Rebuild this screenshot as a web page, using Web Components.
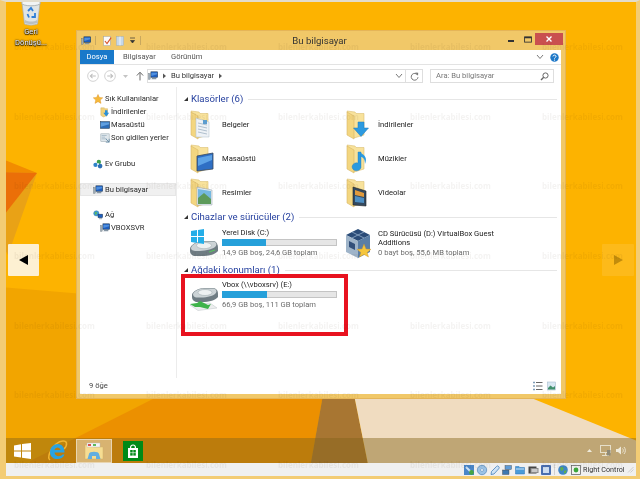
<!DOCTYPE html>
<html lang="tr">
<head>
<meta charset="utf-8">
<title>Bu bilgisayar</title>
<style>
    html, body { margin: 0; padding: 0; background: #f2ca70; }
    body { width: 640px; height: 479px; overflow: hidden; font-family: Roboto, "Open Sans", sans-serif; }
</style>
</head>
<body>
<vm-screen>
    <desk-wallpaper slot="wall"></desk-wallpaper>

    <desktop-icon slot="desk" label="Geri Dönüşü..."></desktop-icon>
    <nav-arrow slot="desk" dir="left"></nav-arrow>
    <nav-arrow slot="desk" dir="right"></nav-arrow>

    <explorer-window slot="desk">
        <nav-item slot="nav" icon="star" level="0">Sık Kullanılanlar</nav-item>
        <nav-item slot="nav" icon="dl-small" level="1">İndirilenler</nav-item>
        <nav-item slot="nav" icon="desk-small" level="1">Masaüstü</nav-item>
        <nav-item slot="nav" icon="recent" level="1">Son gidilen yerler</nav-item>
        <nav-item slot="nav" icon="home" level="0" gap="13">Ev Grubu</nav-item>
        <nav-item slot="nav" icon="pc" level="0" gap="13" selected>Bu bilgisayar</nav-item>
        <nav-item slot="nav" icon="net" level="0" gap="12">Ağ</nav-item>
        <nav-item slot="nav" icon="pc" level="1">VBOXSVR</nav-item>

        <group-header>Klasörler (6)</group-header>
        <item-grid rows="34" style="padding: 2px 0 0">
            <folder-item icon="f-docs">Belgeler</folder-item>
            <folder-item icon="f-down">İndirilenler</folder-item>
            <folder-item icon="f-desk">Masaüstü</folder-item>
            <folder-item icon="f-music">Müzikler</folder-item>
            <folder-item icon="f-pics">Resimler</folder-item>
            <folder-item icon="f-video">Videolar</folder-item>
        </item-grid>

        <group-header>Cihazlar ve sürücüler (2)</group-header>
        <item-grid rows="36">
            <drive-item icon="drive-win" used="38" detail="14,9 GB boş, 24,6 GB toplam">Yerel Disk (C:)</drive-item>
            <drive-item icon="vbox" detail="0 bayt boş, 55,6 MB toplam">CD Sürücüsü (D:) VirtualBox Guest Additions</drive-item>
        </item-grid>

        <group-header style="margin: 1px 0 -1px">Ağdaki konumları (1)</group-header>
        <item-grid rows="36">
            <drive-item icon="drive-net" drop="8" used="39" detail="66,9 GB boş, 111 GB toplam">Vbox (\\vboxsrv) (E:)</drive-item>
        </item-grid>
    </explorer-window>

    <red-mark slot="over"></red-mark>
    <water-mark slot="over"></water-mark>

    <task-bar slot="bar"></task-bar>
    <vm-status slot="bar"></vm-status>
</vm-screen>

<script>
// svg bodies for every icon, keyed by name: [viewBox w, viewBox h, markup]
const folderBase = `
    <path d="M1 1 L9 2 L10 3.5 L18 3.5 L18 25 L8 28 Z" fill="#f8e29b" stroke="#dcbf72" stroke-width=".6"/>
    <path d="M1 2 L8 6 L8 29 L1 25 Z" fill="#f3d680" stroke="#d8b766" stroke-width=".6"/>`;

const ICONS = {
    'f-docs': [24, 30, folderBase + `
        <path d="M6 8 L19 12 L19 27 L6 27 Z" fill="#eef2f6" stroke="#aebcc8" stroke-width=".5"/>
        <path d="M8 13 L17 15 M8 16 L17 18 M8 19 L17 21 M8 22 L17 24" stroke="#9fb2c3" stroke-width=".8"/>
        <rect x="13" y="10" width="4" height="4" fill="#5c9dcf"/>`],
    'f-down': [24, 30, folderBase + `
        <path d="M12 12 H18 V18 H22.5 L15 26.5 L7.5 18 H12 Z" fill="#2c9ae0" stroke="#1b78bc" stroke-width=".5"/>`],
    'f-desk': [24, 30, folderBase + `
        <path d="M7 12 L23 9 L23 25 L7 27 Z" fill="#2f6fc4" stroke="#39475a" stroke-width=".8"/>
        <path d="M8 14 L22 11 L22 16 L8 22 Z" fill="#5ea3e6"/>`],
    'f-music': [24, 30, folderBase + `
        <path d="M15 8 V22 A4.5 4 0 1 1 12 19 V8 Z" fill="#2c9ae0" stroke="#1b78bc" stroke-width=".4"/>
        <path d="M15 9 C20 12 21 15 19 20 C19 15 17 13 15 13 Z" fill="#2c9ae0"/>`],
    'f-pics': [24, 30, folderBase + `
        <path d="M7 9 L22 12 L22 27 L7 27 Z" fill="#e6eef2" stroke="#8c9aa6" stroke-width=".5"/>
        <path d="M8 11 L21 13 L21 21 L8 20 Z" fill="#75b8e0"/>
        <path d="M8 20 L14 15 L21 21 L21 26 L8 26 Z" fill="#5d9a5b"/>`],
    'f-video': [24, 30, folderBase + `
        <path d="M7 9 L20 13 L20 28 L7 27 Z" fill="#33495f" stroke="#222" stroke-width=".6"/>
        <path d="M9 12 L18 15 L18 19 L9 17 Z" fill="#e09a3c"/>
        <path d="M9 18 L18 20 L18 25 L9 24 Z" fill="#4d8fc4"/>`],
    'drive-win': [30, 28, `
        <path d="M1 20 C1 16 8 12 14 12 L25 12 C28 13 29 16 29 19 L29 22 C27 25 20 27 13 27 L5 27 C2 26 1 24 1 22 Z" fill="#6f7c83"/>
        <path d="M2 19 C3 15 9 12.5 14 12.5 L25 12.5 C28 13.5 28 16 26 18 C22 21 12 22.5 6 22 C3 21.5 2 20.5 2 19 Z" fill="#ccd3d6"/>
        <ellipse cx="15" cy="16.5" rx="7.5" ry="3.2" fill="#eef1f2" stroke="#9aa6ab" stroke-width=".5"/>
        <g fill="#25aee8"><path d="M2 2 L8 1 V7 H2 Z"/><path d="M9 .9 L15 0 V7 H9 Z"/><path d="M2 8 H8 V14 L2 13 Z"/><path d="M9 8 H15 V15 L9 14 Z"/></g>
        <path d="M20 23 L26 21" stroke="#58c45e" stroke-width="1.2"/>`],
    'drive-net': [30, 24, `
        <path d="M3 8 C3 5 9 1 15 1 L25 1 C28 2 29 4 29 7 L29 10 C27 13 20 15 13 15 L7 15 C4 14 3 12 3 10 Z" fill="#6f7c83"/>
        <path d="M4 7 C5 4 10 1.5 15 1.5 L25 1.5 C28 2.5 28 5 26 7 C22 10 13 11 7 10.5 C5 10 4 9 4 7 Z" fill="#ccd3d6"/>
        <ellipse cx="16" cy="5.5" rx="7" ry="3" fill="#eef1f2" stroke="#9aa6ab" stroke-width=".5"/>
        <path d="M1 18 L21 16 L28 21 L9 23.5 Z" fill="#eceeee" stroke="#bcc3c6" stroke-width=".5"/>
        <path d="M1 17 L8 16 L11 14 L19 18 L22 17 L19 22 L11 20 L6 20 Z" fill="#3fb34a"/>`],
    'vbox': [26, 29, `
        <path d="M13 0 L25 6 L13 12 L1 6 Z" fill="#2b4c78"/>
        <path d="M1 6 L13 12 L13 29 L1 23 Z" fill="#9fb4c9"/>
        <path d="M25 6 L13 12 L13 29 L25 23 Z" fill="#5a7ea6"/>
        <path d="M4 12 L10 15 V21 L4 18 Z" fill="#33507a"/>
        <path d="M7 3 L19 9 M19 3 L7 9" stroke="#7f9bbb" stroke-width="1"/>
        <path d="M19 15 L21 20 L26 20.3 L22.2 23.4 L23.5 28 L19 25.4 L14.5 28 L15.8 23.4 L12 20.3 L17 20 Z" fill="#f6c63c" stroke="#c9932a" stroke-width=".4"/>`],
    'star': [12, 12, `<path d="M6 .5 L7.7 4.2 L11.7 4.6 L8.7 7.3 L9.6 11.3 L6 9.2 L2.4 11.3 L3.3 7.3 L.3 4.6 L4.3 4.2 Z" fill="#f6b93a" stroke="#d98e22" stroke-width=".5"/>`],
    'dl-small': [12, 12, `<path d="M1 1 L5 1 L6 2 L9 2 V10 L4 12 L1 10 Z" fill="#f1d27a" stroke="#c9a655" stroke-width=".5"/><path d="M6 4 H9 V7 H11 L7.5 11.5 L4 7 H6 Z" fill="#2a8fd8"/>`],
    'desk-small': [12, 12, `<rect x=".5" y="2" width="11" height="8" fill="#2c6cb6" stroke="#26415f" stroke-width=".7"/><path d="M1 3 H11 V5 L1 8 Z" fill="#5f9fe0"/>`],
    'recent': [12, 12, `<rect x="1" y="1" width="10" height="9" fill="#dfe7ec" stroke="#8e9ea8" stroke-width=".6"/><path d="M2 3 H8 M2 5 H6 M2 7 H8" stroke="#8ba3b5" stroke-width=".7"/><path d="M7 7 L11 11 M11 7 L11 11 L7 11" stroke="#56809c" stroke-width=".9" fill="none"/>`],
    'home': [12, 12, `<circle cx="7" cy="3.5" r="2.6" fill="#3e9f4a"/><circle cx="3" cy="7" r="2.6" fill="#2f83c9"/><circle cx="8.5" cy="8.5" r="2.8" fill="#2d6fb5"/><circle cx="6" cy="6" r="1.2" fill="#dff0fa"/>`],
    'pc': [12, 12, `<rect x="3.5" y="1" width="8" height="6.5" fill="#1f5fc0" stroke="#1b3550" stroke-width=".7"/><path d="M4 2 H11 V4 L4 6 Z" fill="#4d8fe0"/><path d="M5 8.5 H10 V10 H4 Z" fill="#8595a3"/><rect x=".6" y="3" width="2" height="7" fill="#9daab5" stroke="#55636e" stroke-width=".4"/>`],
    'net': [12, 12, `<circle cx="4" cy="4" r="3.2" fill="#3d9bd6" stroke="#21638f" stroke-width=".4"/><path d="M2 3 L4 2 L5 4 L3 6 Z" fill="#5cb85c"/><rect x="6" y="5" width="5.5" height="4.2" fill="#1f5fc0" stroke="#1b3550" stroke-width=".6"/><path d="M7 10 H11 V11 H7 Z" fill="#8595a3"/>`],
    'bin': [24, 27, `
        <path d="M3 4 L21 4 L18.5 25 C15 26.5 9 26.5 5.5 25 Z" fill="#dfe4e6" stroke="#a8aeb0" stroke-width=".7"/>
        <ellipse cx="12" cy="4" rx="9.5" ry="2.8" fill="#f2f4f4" stroke="#99a0a2" stroke-width=".7"/>
        <path d="M9 12 L12 9 L14 12 M16 14 L16 18 L12.5 18 M8.5 15 L10 18.5" fill="none" stroke="#2f7ed8" stroke-width="1.8"/>
        <path d="M6 21 C10 23 15 23 18 21 L18 24 C15 25.5 9 25.5 6 24 Z" fill="#b9c0c2"/>`],
    'doc-check': [12, 12, `<rect x="2" y=".5" width="8" height="11" fill="#fbfbfb" stroke="#9aa2a8" stroke-width=".6"/><path d="M3.5 6 L6 9 L11 2" fill="none" stroke="#d9542b" stroke-width="1.4"/>`],
    'doc-pages': [10, 12, `<rect x=".5" y=".5" width="9" height="11" fill="#c6d8ea" stroke="#8ea9c2" stroke-width=".5"/><path d="M5 .5 V11.5" stroke="#fff" stroke-width="1"/>`],
    'qat': [7, 7, `<path d="M1 1 H6 M1.5 3.5 H5.5 L3.5 6 Z" stroke="#333" stroke-width=".7" fill="#333"/>`],
    'min': [8, 8, `<rect x="1" y="5" width="6" height="2" fill="#333"/>`],
    'max': [9, 8, `<rect x=".6" y="1" width="7.8" height="6" fill="none" stroke="#333" stroke-width="1"/><rect x=".6" y="1" width="7.8" height="1.6" fill="#333"/>`],
    'close': [8, 8, `<path d="M1.5 1.5 L6.5 6.5 M6.5 1.5 L1.5 6.5" stroke="#fff" stroke-width="1.4"/>`],
    'chev-down': [8, 6, `<path d="M1 1 L4 4.5 L7 1" fill="none" stroke="#7a7a7a" stroke-width="1"/>`],
    'chev-right': [5, 6, `<path d="M1 .5 L4 3 L1 5.5 Z" fill="#555"/>`],
    'help': [10, 10, `<circle cx="5" cy="5" r="4.7" fill="#1e78c8"/><path d="M3.3 3.8 C3.4 1.8 6.8 1.9 6.7 3.8 C6.6 5 5 5 5 6.2" fill="none" stroke="#fff" stroke-width="1.1"/><circle cx="5" cy="7.8" r=".7" fill="#fff"/>`],
    'back': [13, 13, `<circle cx="6.5" cy="6.5" r="5.8" fill="#fff" stroke="#cfcfcf"/><path d="M9.5 6.5 H4 M6 4.2 L3.6 6.5 L6 8.8" fill="none" stroke="#bdbdbd" stroke-width="1.1"/>`],
    'forward': [13, 13, `<circle cx="6.5" cy="6.5" r="5.8" fill="#fff" stroke="#cfcfcf"/><path d="M3.5 6.5 H9 M7 4.2 L9.4 6.5 L7 8.8" fill="none" stroke="#bdbdbd" stroke-width="1.1"/>`],
    'drop': [7, 5, `<path d="M1 1 H6 L3.5 4 Z" fill="#c4c4c4"/>`],
    'up': [9, 11, `<path d="M4.5 10.5 V2 M1 5 L4.5 1.2 L8 5" fill="none" stroke="#666" stroke-width="1.1"/>`],
    'refresh': [9, 9, `<path d="M7.5 3 A3.4 3.4 0 1 0 8 5.2" fill="none" stroke="#777" stroke-width="1"/><path d="M5.2 .6 L8.2 .8 L8 3.8 Z" fill="#777"/>`],
    'search': [9, 9, `<circle cx="5.5" cy="3.5" r="2.6" fill="none" stroke="#666" stroke-width="1"/><path d="M3.7 5.3 L1 8" stroke="#666" stroke-width="1.4"/>`],
    'view-list': [11, 10, `<path d="M1 1.5 H3 M1 5 H3 M1 8.5 H3" stroke="#7f9db9" stroke-width="1.6"/><path d="M4 1.5 H10.5 M4 5 H10.5 M4 8.5 H10.5" stroke="#666" stroke-width="1"/>`],
    'view-tile': [9, 10, `<rect x=".5" y="1" width="8" height="8" fill="#d9e7f2" stroke="#9cb4c8" stroke-width=".5"/><path d="M1 7 L3.5 4.5 L6 6.5 L8 5 V8.5 H1 Z" fill="#3f8f6c"/>`],
    'win': [17, 16, `<g fill="#fff"><path d="M0 2.4 L7 1.3 V7.4 H0 Z"/><path d="M8 1.1 L17 0 V7.4 H8 Z"/><path d="M0 8.4 H7 V14.6 L0 13.6 Z"/><path d="M8 8.4 H17 V16 L8 14.8 Z"/></g>`],
    'ie': [20, 20, `
        <path d="M3 19 C0 17 3 8 9 3 C14 -1 19 -.5 19.5 2 C19.8 4 18 7 17 8" fill="none" stroke="#f2b531" stroke-width="1.5"/>
        <path d="M3 11 C3 6 7 3 11 3 C15 3 17.5 6.5 17.5 11.5 H7.5 C8 16 13.5 16 15.5 13.5 H17.5 C15.5 20 3 20 3 11 Z M7.5 9 H13.5 C13 5.5 8 5.5 7.5 9 Z" fill="#2aa3e2"/>`],
    'explorer': [20, 18, `
        <path d="M1 3 H8 L9.5 5 H19 V17 H1 Z" fill="#f6dd92" stroke="#d2b266" stroke-width=".5"/>
        <rect x="3" y="1" width="13" height="4" fill="#f4f4f4" stroke="#b9b9b9" stroke-width=".4"/>
        <path d="M4 2 H7 V4 H4 Z" fill="#d9534f"/><path d="M9 2 H12 V4 H9 Z" fill="#5cb85c"/>
        <path d="M5 12 C5 9 15 9 15 12 L16.5 17 H12 V14 H8 V17 H3.5 Z" fill="#62aee0"/>`],
    'store': [20, 20, `
        <rect width="20" height="20" fill="#008a17"/>
        <path d="M5 7 H15 V17 H5 Z" fill="#fff"/>
        <path d="M7.5 7 C7.5 3 12.5 3 12.5 7" fill="none" stroke="#fff" stroke-width="1.2"/>
        <g fill="#008a17"><rect x="7.2" y="9" width="2.5" height="2.5"/><rect x="10.3" y="9" width="2.5" height="2.5"/><rect x="7.2" y="12.1" width="2.5" height="2.5"/><rect x="10.3" y="12.1" width="2.5" height="2.5"/></g>`],
    'tray-up': [7, 5, `<path d="M1 4 L3.5 1 L6 4 Z" fill="#efeadb"/>`],
    'tray-net': [11, 11, `<rect x=".5" y=".5" width="10" height="7" fill="none" stroke="#e6dfca" stroke-width="1"/><path d="M5.5 8 V10.5 M2 10.5 H9" stroke="#e6dfca" stroke-width="1"/><rect x="7" y="5" width="3.5" height="5.5" fill="#8e8a78"/>`],
    'tray-vol': [11, 11, `<path d="M1 4 H3 L6 1.5 V9.5 L3 7 H1 Z" fill="#efeadb"/><path d="M7.5 3.5 C8.6 4.6 8.6 6.4 7.5 7.5 M9 2 C10.8 4 10.8 7 9 9" fill="none" stroke="#efeadb" stroke-width=".9"/>`],
    'vm-storage': [10, 10, `<rect width="10" height="10" fill="#4a86c8"/><path d="M2 2 L7 7" stroke="#cfe3f5" stroke-width="2"/><circle cx="7.5" cy="7.5" r="2.4" fill="#46a546"/>`],
    'vm-disc': [10, 10, `<circle cx="5" cy="5" r="4.7" fill="#9cc3e6" stroke="#3f78b0" stroke-width=".6"/><circle cx="5" cy="5" r="1.4" fill="#fff" stroke="#3f78b0" stroke-width=".5"/>`],
    'vm-usb': [10, 10, `<path d="M8 1 C9.5 2 9.5 3 8.5 4 L4 9 L1 9.5 L1.5 6.5 L6 2 C6.8 1 7.3 .7 8 1 Z" fill="#cfe3f5" stroke="#2f72b5" stroke-width=".7"/>`],
    'vm-share': [10, 10, `<rect x="3" y=".5" width="6.5" height="4" fill="#5f9bd6" stroke="#444" stroke-width=".4"/><rect x=".5" y="5" width="6.5" height="4.5" fill="#3f78b0" stroke="#444" stroke-width=".4"/>`],
    'vm-folder': [10, 10, `<path d="M.5 1.5 H4 L5 2.5 H9.5 V9 H.5 Z" fill="#4a9bd8" stroke="#2f72b5" stroke-width=".5"/><rect x="1" y="3.5" width="8" height="1" fill="#cfe3f5"/>`],
    'vm-screen': [11, 10, `<rect x=".5" y="1.5" width="8" height="7" fill="#444"/><rect x="2.5" y="3" width="8" height="5" fill="#8a8a8a"/><rect x="3.5" y="4" width="6" height="3" fill="#c9c9c9"/>`],
    'vm-rec': [10, 10, `<rect width="10" height="10" fill="#4a6fb0" rx="1"/><rect x="2" y="2" width="6" height="6" fill="#cdddf0"/>`],
    'vm-globe': [10, 10, `<circle cx="5" cy="5" r="4.8" fill="#3f86c6"/><path d="M2 2.5 L5 2 L5.5 5 L3 6 Z M6 6 L8.5 5 L8 8 L6 8.5 Z" fill="#5fb04d"/>`],
    'vm-key': [10, 10, `<rect x=".5" y=".5" width="9" height="9" fill="#f1f1f1" stroke="#555" stroke-width=".7"/><circle cx="5" cy="5" r="2.4" fill="#3aa53a"/>`],
    'grip': [7, 7, `<path d="M6.5 1 L1 6.5 M6.5 3.5 L3.5 6.5" stroke="#c3c3c3" stroke-width=".8"/>`]
};

class UiIcon extends HTMLElement {
    connectedCallback() {
        const [w, h, body] = ICONS[this.getAttribute('name')];
        const dw = this.getAttribute('w') || w;
        const dh = this.getAttribute('h') || h;
        this.attachShadow({ mode: 'open' }).innerHTML = `
        <style>:host { display: block; flex: none; line-height: 0; } svg { overflow: visible; }</style>
        <svg width="${dw}" height="${dh}" viewBox="0 0 ${w} ${h}">${body}</svg>`;
    }
}
customElements.define('ui-icon', UiIcon);

class VmScreen extends HTMLElement {
    constructor() {
        super();
        this.attachShadow({ mode: 'open' }).innerHTML = `
        <style>
            :host {
                display: block; width: 640px; height: 479px; box-sizing: border-box;
                border-style: solid; border-color: #f3cc74; border-width: 2px 4px 3px 6px;
                border-top-color: #e3dccb;
                filter: blur(.45px);
            }
            .screen { position: relative; width: 100%; height: 100%; display: flex; flex-direction: column; overflow: hidden; background: #fdb300; }
            .desk { position: relative; flex: 1; }
        </style>
        <div class="screen">
            <slot name="wall"></slot>
            <div class="desk"><slot name="desk"></slot></div>
            <slot name="bar"></slot>
            <slot name="over"></slot>
        </div>`;
    }
}
customElements.define('vm-screen', VmScreen);

class DeskWallpaper extends HTMLElement {
    connectedCallback() {
        this.attachShadow({ mode: 'open' }).innerHTML = `
        <style>:host { position: absolute; left: -6px; top: -2px; width: 640px; height: 479px; line-height: 0; }</style>
        <svg width="640" height="479" viewBox="0 0 640 479">
            <rect width="640" height="479" fill="#fdb300"/>
            <polygon points="0,160 37,173 8,255 0,240" fill="#e9a216"/>
            <polygon points="0,158 37,173 0,172" fill="#f28c00"/>
            <polygon points="0,172 37,173 0,220" fill="#eb6f08"/>
            <polygon points="0,287 420,322 320,479 0,479" fill="#f2a500"/>
            <polygon points="30,461 250,350 331,350 308,479 30,479" fill="#ec9000"/>
            <polygon points="331,350 345,350 371,479 308,479" fill="#a87632"/>
            <polygon points="345,350 413,350 640,442 640,479 371,479" fill="#f0dcc0"/>
        </svg>`;
    }
}
customElements.define('desk-wallpaper', DeskWallpaper);

class DesktopIcon extends HTMLElement {
    connectedCallback() {
        const [a, b] = this.getAttribute('label').split(' ');
        this.attachShadow({ mode: 'open' }).innerHTML = `
        <style>
            :host {
                position: absolute; left: 3px; top: -3px; width: 44px;
                display: flex; flex-direction: column; align-items: center;
                font: 7.6px/10.5px Roboto, sans-serif; color: #fff; text-align: center;
                text-shadow: 0 0 1px #000, 0 1px 1px #000, 0 0 2px #222;
            }
            .t { margin-top: 1px; }
        </style>
        <ui-icon name="bin"></ui-icon>
        <div class="t">${a}<br>${b}</div>`;
    }
}
customElements.define('desktop-icon', DesktopIcon);

class NavArrow extends HTMLElement {
    connectedCallback() {
        const left = this.getAttribute('dir') === 'left';
        this.attachShadow({ mode: 'open' }).innerHTML = `
        <style>
            :host {
                position: absolute; top: 242px; ${left ? 'left: 2px' : 'left: 596px'};
                width: ${left ? 31 : 32}px; height: 32px; display: flex; align-items: center; justify-content: center;
                background: ${left ? '#fdf0d2' : 'rgba(255,255,255,.1)'}; border-radius: 1px;
            }
            i {
                width: 0; height: 0; border-style: solid; border-width: 5px 0 5px 9px;
                border-color: transparent transparent transparent ${left ? '#000' : '#c28c0c'};
                ${left ? 'transform: rotate(180deg);' : ''}
            }
        </style>
        <i></i>`;
    }
}
customElements.define('nav-arrow', NavArrow);

class ExplorerWindow extends HTMLElement {
    constructor() {
        super();
        this.attachShadow({ mode: 'open' }).innerHTML = `
        <style>
            :host {
                position: absolute; left: 70px; top: 28px; width: 490px; height: 369px;
                box-sizing: border-box; display: flex; flex-direction: column;
                background: #f1c868; border: 1px solid #e5b558; padding: 0 4px 4px 3px;
                font: 7.6px/12px Roboto, sans-serif; color: #222;
            }
            .title { height: 19px; flex: none; display: grid; grid-template-columns: 1fr auto 1fr; align-items: center; margin-right: -2px; }
            .qat { display: flex; align-items: center; padding-left: 1px; }
            .sep { width: 1px; height: 9px; background: #c9a85e; }
            .qat .a { margin-left: 4px; }
            .qat .b { margin-left: 6px; }
            .qat .c { margin-left: 4px; }
            .qat .d { margin-left: 5px; }
            .name { font-size: 9.6px; padding-right: 4px; color: #333; }
            .ctl { justify-self: end; display: flex; align-items: center; height: 14px; align-self: start; padding-top: 1px; }
            .ctl .m { margin-right: 9px; }
            .ctl .r { margin-right: 3px; }
            .x { width: 28px; height: 12px; background: #c9504f; display: flex; align-items: center; justify-content: center; }
            .client { flex: 1; min-height: 0; background: #fff; display: flex; flex-direction: column; }
            .tabs { height: 14px; flex: none; display: flex; align-items: center; border-bottom: 1px solid #e3e3e3; color: #555; }
            .tabs b { font-weight: 400; background: #1979ca; color: #fff; width: 34px; height: 14px; line-height: 14px; text-align: center; margin-right: 9px; }
            .tabs span { width: 48px; }
            .tabs .end { margin-left: auto; display: flex; align-items: center; gap: 6px; padding-right: 2px; }
            .navbar { height: 22px; flex: none; display: flex; align-items: center; padding-left: 7px; }
            .navbar .back { margin-right: 5px; }
            .navbar .drop { margin: 0 7px 0 6px; }
            .addr, .find { height: 14px; box-sizing: border-box; border: 1px solid #dedede; display: flex; align-items: center; color: #333; }
            .addr { width: 276px; margin-left: 3px; gap: 4px; }
            .addr .grow { flex: 1; }
            .addr .cell { height: 100%; width: 16px; border-left: 1px solid #dedede; display: flex; align-items: center; justify-content: center; margin-left: -2px; }
            .find { width: 124px; margin-left: 7px; padding: 0 4px 0 5px; color: #777; justify-content: space-between; }
            .body { flex: 1; min-height: 0; display: flex; }
            .side { width: 97px; flex: none; box-sizing: border-box; border-right: 1px solid #ececec; padding-top: 5px; }
            .main { flex: 1; padding: 5px 4px 0 7px; display: flex; flex-direction: column; }
            .foot { height: 16px; flex: none; display: flex; align-items: center; padding: 0 5px 0 9px; gap: 4px; color: #444; }
            .foot span { margin-right: auto; }
        </style>
        <div class="title">
            <div class="qat">
                <ui-icon name="pc" w="10" h="10"></ui-icon><div class="sep a"></div>
                <ui-icon class="b" name="doc-check" w="10" h="10"></ui-icon>
                <ui-icon class="c" name="doc-pages" w="8" h="10"></ui-icon>
                <ui-icon class="d" name="qat"></ui-icon>
                <div class="sep c"></div>
            </div>
            <div class="name">Bu bilgisayar</div>
            <div class="ctl">
                <ui-icon class="m" name="min"></ui-icon><ui-icon class="r" name="max" w="8" h="7"></ui-icon>
                <div class="x"><ui-icon name="close"></ui-icon></div>
            </div>
        </div>
        <div class="client">
            <div class="tabs">
                <b>Dosya</b><span>Bilgisayar</span><span>Görünüm</span>
                <div class="end"><ui-icon name="chev-down"></ui-icon><ui-icon name="help" w="9" h="9"></ui-icon></div>
            </div>
            <div class="navbar">
                <ui-icon class="back" name="back" w="12" h="12"></ui-icon><ui-icon name="forward" w="12" h="12"></ui-icon>
                <ui-icon class="drop" name="drop"></ui-icon><ui-icon name="up" w="8" h="10"></ui-icon>
                <div class="addr">
                    <ui-icon name="pc" w="10" h="10"></ui-icon><ui-icon name="chev-right"></ui-icon>
                    <span>Bu bilgisayar</span><ui-icon name="chev-right"></ui-icon>
                    <div class="grow"></div>
                    <ui-icon name="chev-down"></ui-icon>
                    <div class="cell"><ui-icon name="refresh"></ui-icon></div>
                </div>
                <div class="find"><span>Ara: Bu bilgisayar</span><ui-icon name="search"></ui-icon></div>
            </div>
            <div class="body">
                <div class="side"><slot name="nav"></slot></div>
                <div class="main"><slot></slot></div>
            </div>
            <div class="foot"><span>9 öğe</span><ui-icon name="view-list"></ui-icon><ui-icon name="view-tile"></ui-icon></div>
        </div>`;
    }
}
customElements.define('explorer-window', ExplorerWindow);

class NavItem extends HTMLElement {
    connectedCallback() {
        const nested = this.getAttribute('level') === '1';
        const gap = this.getAttribute('gap');
        this.attachShadow({ mode: 'open' }).innerHTML = `
        <style>
            :host {
                display: flex; align-items: center; height: 13px; gap: ${nested ? 1 : 2}px; white-space: nowrap;
                padding-left: ${nested ? 20 : 13}px; color: #2a2a2a;
                ${gap ? `margin-top: ${gap}px;` : ''}
                ${this.hasAttribute('selected') ? 'background: #f0f0f0; box-shadow: inset 0 0 0 1px #e6e6e6;' : ''}
            }
        </style>
        <ui-icon name="${this.getAttribute('icon')}" w="10" h="10"></ui-icon><slot></slot>`;
    }
}
customElements.define('nav-item', NavItem);

class GroupHeader extends HTMLElement {
    constructor() {
        super();
        this.attachShadow({ mode: 'open' }).innerHTML = `
        <style>
            :host {
                display: flex; align-items: center; height: 14px; flex: none;
                font-size: 9.6px; color: #243f9e;
            }
            i { width: 0; height: 0; border-style: solid; border-width: 0 0 4px 4px; border-color: transparent transparent #333 transparent; margin-right: 3px; }
            u { flex: 1; height: 1px; background: #e6e6e6; margin-left: 5px; }
        </style>
        <i></i><slot></slot><u></u>`;
    }
}
customElements.define('group-header', GroupHeader);

class ItemGrid extends HTMLElement {
    connectedCallback() {
        this.attachShadow({ mode: 'open' }).innerHTML = `
        <style>
            :host { display: grid; grid-template-columns: 156px 1fr; grid-auto-rows: ${this.getAttribute('rows')}px; flex: none; padding: 1px 0; }
        </style>
        <slot></slot>`;
    }
}
customElements.define('item-grid', ItemGrid);

class FolderItem extends HTMLElement {
    connectedCallback() {
        this.attachShadow({ mode: 'open' }).innerHTML = `
        <style>
            :host { display: flex; align-items: center; padding-left: 6px; gap: 8px; color: #222; }
        </style>
        <ui-icon name="${this.getAttribute('icon')}"></ui-icon><slot></slot>`;
    }
}
customElements.define('folder-item', FolderItem);

class DriveItem extends HTMLElement {
    connectedCallback() {
        const used = this.getAttribute('used');
        this.attachShadow({ mode: 'open' }).innerHTML = `
        <style>
            :host { display: flex; align-items: center; padding-left: 5px; }
            .ic { width: 33px; flex: none; box-sizing: border-box; padding-top: ${this.getAttribute('drop') || 0}px; }
            .tx { width: 115px; line-height: 9.5px; color: #222; }
            .wide { width: 122px; }
            .bar { height: 7px; margin: 1px 0 2px; box-sizing: border-box; background: #e6e6e6; border: 1px solid #c4c4c4; }
            .bar div { height: 100%; width: ${used}%; background: #26a0da; margin: -1px 0 0 -1px; padding: 1px 0 1px 1px; box-sizing: content-box; }
            .dt { color: #6d6d6d; line-height: 10px; white-space: nowrap; }
        </style>
        <div class="ic"><ui-icon name="${this.getAttribute('icon')}"></ui-icon></div>
        <div class="tx ${used ? '' : 'wide'}">
            <slot></slot>
            ${used ? '<div class="bar"><div></div></div>' : ''}
            <div class="dt">${this.getAttribute('detail')}</div>
        </div>`;
    }
}
customElements.define('drive-item', DriveItem);

class RedMark extends HTMLElement {
    connectedCallback() {
        this.attachShadow({ mode: 'open' }).innerHTML = `
        <style>
            :host { position: absolute; left: 175px; top: 272px; width: 167px; height: 62px; box-sizing: border-box; border: 4px solid #e8121f; }
        </style>`;
    }
}
customElements.define('red-mark', RedMark);

class WaterMark extends HTMLElement {
    connectedCallback() {
        const cells = Array.from({ length: 35 }, () => '<span>bilenlerkabilesi.com</span>').join('');
        this.attachShadow({ mode: 'open' }).innerHTML = `
        <style>
            :host {
                position: absolute; left: 8px; top: 40px; pointer-events: none;
                display: grid; grid-template-columns: repeat(5, 132px); grid-auto-rows: 69.7px;
                font: 700 8px/10px "Open Sans", sans-serif; color: rgba(60, 40, 0, .055);
            }
        </style>
        ${cells}`;
    }
}
customElements.define('water-mark', WaterMark);

class TaskBar extends HTMLElement {
    connectedCallback() {
        this.attachShadow({ mode: 'open' }).innerHTML = `
        <style>
            :host {
                position: relative; display: flex; align-items: center; height: 25px; flex: none;
                background: rgba(131, 100, 27, .45); padding-left: 8px;
            }
            .start { margin-right: 16px; }
            .ie { margin-right: 9px; }
            .run { width: 36px; height: 24px; box-sizing: border-box; margin-right: 11px; display: flex; align-items: center; justify-content: center; background: rgba(255,255,255,.42); border: 1px solid rgba(255,255,255,.45); }
            .tray { margin-left: auto; display: flex; align-items: center; padding-right: 10px; }
            .tray ui-icon:nth-child(1) { margin-right: 7px; }
            .tray ui-icon:nth-child(2) { margin-right: 4px; }
        </style>
        <ui-icon class="start" name="win"></ui-icon>
        <ui-icon class="ie" name="ie"></ui-icon>
        <div class="run"><ui-icon name="explorer"></ui-icon></div>
        <ui-icon name="store"></ui-icon>
        <div class="tray"><ui-icon name="tray-up"></ui-icon><ui-icon name="tray-net"></ui-icon><ui-icon name="tray-vol"></ui-icon></div>`;
    }
}
customElements.define('task-bar', TaskBar);

class VmStatus extends HTMLElement {
    connectedCallback() {
        const names = ['vm-storage', 'vm-disc', 'vm-usb', 'vm-share', 'vm-folder', 'vm-screen', 'vm-rec'];
        this.attachShadow({ mode: 'open' }).innerHTML = `
        <style>
            :host {
                position: relative; display: flex; align-items: center; justify-content: flex-end; height: 13px; flex: none;
                background: #f0f0f0; font: 7.2px/13px Roboto, sans-serif; color: #333; padding-right: 2px;
            }
            .sep { width: 1px; height: 11px; background: #d0d0d0; margin: 0 3px; }
            .set { display: flex; gap: 2.7px; }
            .lbl { width: 39px; margin: 0 5px 0 2px; white-space: nowrap; }
        </style>
        <div class="set">${names.map(n => `<ui-icon name="${n}"></ui-icon>`).join('')}</div>
        <div class="sep"></div>
        <div class="set"><ui-icon name="vm-globe"></ui-icon><ui-icon name="vm-key"></ui-icon></div>
        <span class="lbl">Right Control</span>
        <ui-icon name="grip"></ui-icon>`;
    }
}
customElements.define('vm-status', VmStatus);
</script>
</body>
</html>
